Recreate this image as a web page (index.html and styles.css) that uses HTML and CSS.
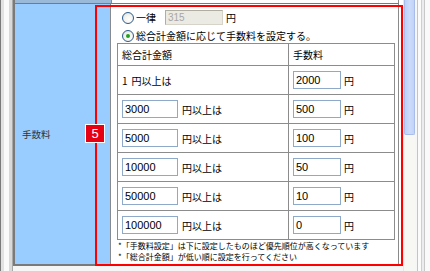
FILE: index.html
```html
<!DOCTYPE html>
<html lang="ja">
<head>
<meta charset="utf-8">
<link rel="stylesheet" href="styles.css">
</head>
<body>
<div class="screen">
  <div class="chrome-left"></div>
  <div class="page">
    <div class="prev-row"><div class="prev-label"></div><div class="prev-content"></div></div>
    <div class="form-row">
      <div class="label-cell">手数料</div>
      <div class="content-cell">
        <div class="radio-line line1">
          <span class="radio"></span><span class="jp">一律</span><span class="field disabled">315</span><span class="jp yen">円</span>
        </div>
        <div class="radio-line line2">
          <span class="radio checked"></span><span class="jp">総合計金額に応じて手数料を設定する。</span>
        </div>
        <div class="fee-table">
          <div class="cell head col1">総合計金額</div>
          <div class="cell head col2">手数料</div>

          <div class="cell col1"><span class="num">1</span>円以上は</div>
          <div class="cell col2"><span class="field fee">2000</span><span class="unit">円</span></div>

          <div class="cell col1"><span class="field amt">3000</span><span class="unit">円以上は</span></div>
          <div class="cell col2"><span class="field fee">500</span><span class="unit">円</span></div>

          <div class="cell col1"><span class="field amt">5000</span><span class="unit">円以上は</span></div>
          <div class="cell col2"><span class="field fee">100</span><span class="unit">円</span></div>

          <div class="cell col1"><span class="field amt">10000</span><span class="unit">円以上は</span></div>
          <div class="cell col2"><span class="field fee">50</span><span class="unit">円</span></div>

          <div class="cell col1"><span class="field amt">50000</span><span class="unit">円以上は</span></div>
          <div class="cell col2"><span class="field fee">10</span><span class="unit">円</span></div>

          <div class="cell col1"><span class="field amt">100000</span><span class="unit">円以上は</span></div>
          <div class="cell col2"><span class="field fee">0</span><span class="unit">円</span></div>
        </div>
        <div class="notes">
          <div>*「手数料設定」は下に設定したものほど優先順位が高くなっています</div>
          <div>*「総合計金額」が低い順に設定を行ってください</div>
        </div>
      </div>
    </div>
    <div class="bottom-strip"></div>
  </div>
  <div class="scrollbar"><div class="thumb"></div></div>
  <div class="chrome-right"></div>
  <div class="annotation"></div>
  <div class="badge">5</div>
</div>
</body>
</html>
```

FILE: styles.css
```css
* { box-sizing: border-box; }
html, body { margin: 0; padding: 0; }
body {
  width: 430px;
  height: 271px;
  overflow: hidden;
  background: #f4f4f4;
  font-family: "Noto Sans CJK JP", "Liberation Sans", sans-serif;
}
.screen {
  position: relative;
  display: flex;
  width: 430px;
  height: 271px;
}
.chrome-left {
  width: 13px;
  flex: none;
  background: linear-gradient(to right,
    #7a7a7a 0, #7a7a7a 1px,
    #e2e2e2 1px, #e2e2e2 4px,
    #fafafa 4px, #fafafa 9px,
    #d9d9d9 9px, #d9d9d9 12px,
    #a8a8a8 12px, #a8a8a8 13px);
}
.page {
  width: 390px;
  flex: none;
  display: flex;
  flex-direction: column;
  background: #ffffff;
}
.prev-row {
  height: 3px;
  display: flex;
  flex: none;
}
.prev-label {
  width: 98px;
  background: #9ab9d9;
  border-left: 2px solid #7a7a7a;
}
.prev-content {
  width: 288px;
  background: #ffffff;
  border-left: 1px solid #8a8a8a;
  border-right: 1px solid #8a8a8a;
}
.form-row {
  display: flex;
  height: 263px;
  flex: none;
  border-top: 1px solid #7a7a7a;
  border-bottom: 2px solid #7a7a7a;
  border-left: 2px solid #7a7a7a;
  width: 386px;
}
.label-cell {
  width: 96px;
  flex: none;
  background: #99ccff;
  border-right: 1px solid #8a8a8a;
  display: flex;
  align-items: center;
  padding-left: 7px;
  font-size: 9.5px;
  color: #333;
}
.content-cell {
  width: 288px;
  flex: none;
  background: #ffffff;
  border-right: 1px solid #8a8a8a;
  padding-top: 6px;
}
.radio-line {
  display: flex;
  align-items: center;
  height: 15px;
  padding-left: 11px;
  font-size: 10px;
  color: #000;
}
.line2 { margin-top: 3px; }
.radio {
  width: 12px;
  height: 12px;
  border-radius: 50%;
  border: 1px solid #2c5a8c;
  background: radial-gradient(circle at 60% 65%, #ffffff 0, #f2f2ee 50%, #d8d8d0 100%);
  margin-right: 2px;
  flex: none;
  display: flex;
  align-items: center;
  justify-content: center;
}
.radio.checked::after {
  content: "";
  width: 4px;
  height: 4px;
  border-radius: 50%;
  background: #21a121;
}
.jp { white-space: nowrap; }
.field {
  display: inline-flex;
  align-items: center;
  height: 18px;
  border: 1px solid #8fa9c9;
  background: #fff;
  padding-left: 2px;
  font-family: "Liberation Sans", sans-serif;
  font-size: 11px;
  color: #000;
  flex: none;
}
.field.disabled {
  width: 58px;
  height: 15px;
  margin-left: 9px;
  background: #ebebe4;
  border-color: #b0aea0 #d6d4c8 #d6d4c8 #b0aea0;
  color: #a6a6a6;
  font-size: 10px;
}
.yen { margin-left: 3px; }
.fee-table {
  display: grid;
  grid-template-columns: 171px 105px;
  width: 278px;
  margin-left: 6px;
  border: 1px solid #8c8c8c;
  font-size: 10px;
  color: #000;
}
.cell {
  height: 29px;
  border-top: 1px solid #8c8c8c;
  display: flex;
  align-items: center;
  padding-left: 4px;
  white-space: nowrap;
}
.cell.head {
  height: 21px;
  border-top: none;
}
.cell.col1 { border-right: 1px solid #8c8c8c; }
.num { margin-right: 4px; }
.field.amt { width: 56px; }
.field.fee { width: 48px; }
.unit { margin-left: 4px; }
.col2 .unit { margin-left: 3px; }
.notes {
  margin-left: 7px;
  margin-top: 0px;
  font-size: 8px;
  line-height: 11px;
  color: #000;
  white-space: nowrap;
}
.bottom-strip {
  flex: 1;
  background: #f6f6f6;
}
.scrollbar {
  width: 12px;
  flex: none;
  background: #f7f7f3;
  border-left: 1px solid #e8e8e8;
}
.thumb {
  height: 135px;
  background: linear-gradient(to right, #bcd0fa, #cddcfb 50%, #c2d3f8);
  border: 1px solid #a9bdea;
  border-top: none;
  border-radius: 0 0 2px 2px;
}
.chrome-right {
  flex: 1;
  background: linear-gradient(to right,
    #f6f6f6 0, #f6f6f6 2px,
    #c4c4c4 2px, #c4c4c4 3px,
    #fbfbfb 3px, #fbfbfb 6px,
    #cfcfcf 6px, #cfcfcf 7px,
    #ececec 7px, #ececec 9px,
    #c8c8c8 9px, #c8c8c8 10px,
    #fafafa 10px);
}
.annotation {
  position: absolute;
  left: 95px;
  top: 5px;
  width: 308px;
  height: 261px;
  border: 2px solid #ff0000;
}
.badge {
  position: absolute;
  left: 85px;
  top: 124px;
  width: 20px;
  height: 19px;
  background: #e60012;
  border: 1px solid #ffffff;
  color: #ffffff;
  font-family: "Liberation Sans", sans-serif;
  font-size: 13px;
  line-height: 17px;
  text-align: center;
}
```
